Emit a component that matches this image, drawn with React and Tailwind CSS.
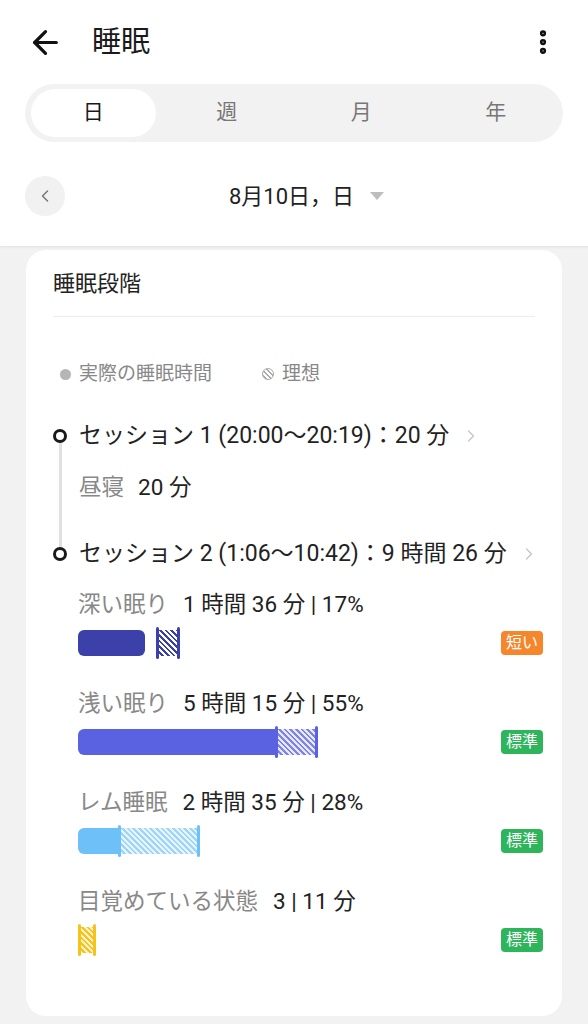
import { ArrowLeft, ChevronLeft, ChevronRight, EllipsisVertical } from 'lucide-react'

const FONT = 'font-[Roboto,"Noto_Sans_CJK_JP",sans-serif]'

const stages = [
  {
    label: '深い眠り',
    value: '1 時間 36 分 | 17%',
    solid: 67,
    gap: 11,
    hatch: 21,
    color: 'bg-[#3b41a9]',
    stripes: 'bg-[repeating-linear-gradient(45deg,#fff_0px,#fff_2px,#3b41a9_2px,#3b41a9_4px)]',
    badge: '短い',
    badgeColor: 'bg-[#f5862c]',
  },
  {
    label: '浅い眠り',
    value: '5 時間 15 分 | 55%',
    solid: 197,
    gap: 0,
    hatch: 40,
    color: 'bg-[#5b62e2]',
    stripes: 'bg-[repeating-linear-gradient(45deg,#e7e8fb_0px,#e7e8fb_2px,#7d83e8_2px,#7d83e8_4px)]',
    badge: '標準',
    badgeColor: 'bg-[#2eb45b]',
  },
  {
    label: 'レム睡眠',
    value: '2 時間 35 分 | 28%',
    solid: 40,
    gap: 0,
    hatch: 79,
    color: 'bg-[#6dc1f8]',
    stripes: 'bg-[repeating-linear-gradient(45deg,#e6f4fe_0px,#e6f4fe_2px,#9dd5fa_2px,#9dd5fa_4px)]',
    badge: '標準',
    badgeColor: 'bg-[#2eb45b]',
  },
  {
    label: '目覚めている状態',
    value: '3 | 11 分',
    solid: 0,
    gap: 0,
    hatch: 15,
    color: 'bg-[#f6c21c]',
    stripes: 'bg-[repeating-linear-gradient(45deg,#fdf1c6_0px,#fdf1c6_2px,#f6c21c_2px,#f6c21c_4px)]',
    badge: '標準',
    badgeColor: 'bg-[#2eb45b]',
  },
]

const StageBar = ({ s }) => (
  <div className="flex items-center h-[32px]">
    {s.solid > 0 && (
      <div className={`h-[26px] rounded-l-[6px] ${s.color} ${s.gap ? 'rounded-r-[6px]' : ''}`} style={{ width: s.solid }} />
    )}
    {s.gap > 0 && <div style={{ width: s.gap }} />}
    <div className={`w-[3px] h-[32px] rounded-full ${s.color}`} />
    <div className={`h-[26px] ${s.stripes}`} style={{ width: s.hatch - 3 }} />
    <div className={`w-[3px] h-[32px] rounded-full ${s.color}`} />
  </div>
)

export default function App() {
  const tabs = ['日', '週', '月', '年']
  return (
    <div className={`min-h-[1024px] bg-[#f2f2f2] ${FONT} text-[#1e1e1e]`}>
      {/* Header */}
      <div className="bg-white border-b border-[#e6e6e6] shadow-[0_1px_2px_rgba(0,0,0,0.04)]">
        <div className="h-[84px] flex items-center pl-[27px] pr-[30px]">
          <ArrowLeft className="w-[37px] h-[37px] text-[#111]" strokeWidth={2.1} />
          <h1 className="ml-[28px] text-[29px] leading-none text-[#1a1a1a]">睡眠</h1>
          <EllipsisVertical className="ml-auto w-[30px] h-[30px] text-[#111]" strokeWidth={3} />
        </div>

        <div className="mx-[25px] h-[58px] rounded-full bg-[#f2f2f2] grid grid-cols-4">
          {tabs.map((t, i) =>
            i === 0 ? (
              <div key={t} className="flex py-[5px] pl-[6px] pr-[4px]">
                <div className="flex-1 flex items-center justify-center rounded-full bg-white text-[21px] text-[#1a1a1a]">
                  {t}
                </div>
              </div>
            ) : (
              <div key={t} className="flex items-center justify-center text-[21px] text-[#777]">
                {t}
              </div>
            )
          )}
        </div>

        <div className="mt-[34px] pb-[30px] px-[25px] flex items-center">
          <div className="w-[40px] h-[40px] rounded-full bg-[#f1f1f1] flex items-center justify-center">
            <ChevronLeft className="w-[20px] h-[20px] text-[#777]" strokeWidth={1.8} />
          </div>
          <span className="ml-[164px] text-[22px] text-[#222]">8月10日，日</span>
          <span className="ml-[16px] w-0 h-0 border-l-[7px] border-r-[7px] border-t-[8px] border-l-transparent border-r-transparent border-t-[#bdbdbd]" />
        </div>
      </div>

      {/* Card */}
      <div className="mx-[26px] mt-[3px] bg-white rounded-[20px] px-[27px] pb-[60px]">
        <div className="h-[67px] flex items-center text-[22px] text-[#222] border-b border-[#ececec]">睡眠段階</div>

        <div className="mt-[40px] h-[34px] flex items-center text-[19px] text-[#888]">
          <span className="ml-[7px] w-[11px] h-[11px] rounded-full bg-[#b5b5b5]" />
          <span className="ml-[8px]">実際の睡眠時間</span>
          <span className="ml-[50px] w-[12px] h-[12px] rounded-full border border-[#aaa] bg-[repeating-linear-gradient(45deg,#fff_0px,#fff_2px,#aaa_2px,#aaa_3.5px)]" />
          <span className="ml-[8px]">理想</span>
        </div>

        {/* Sessions */}
        <div className="mt-[28px] flex">
          <div className="shrink-0 w-[28px] -ml-[7px] flex flex-col items-center pt-[10px]">
            <span className="w-[14px] h-[14px] rounded-full border-[3px] border-[#1a1a1a]" />
            <span className="w-[3px] h-[104px] bg-[#e0e0e0]" />
            <span className="w-[14px] h-[14px] rounded-full border-[3px] border-[#1a1a1a]" />
          </div>
          <div className="flex-1 min-w-0 ml-[5px] whitespace-nowrap">
            <div className="h-[34px] flex items-center text-[23px] text-[#222]">
              <span>セッション 1 (20:00〜20:19)：20 分</span>
              <ChevronRight className="shrink-0 ml-[12px] w-[20px] h-[20px] text-[#c4c4c4]" strokeWidth={1.5} />
            </div>
            <div className="mt-[18px] h-[34px] flex items-center text-[22.5px]">
              <span className="text-[#888]">昼寝</span>
              <span className="ml-[14px] text-[#222]">20 分</span>
            </div>
            <div className="mt-[32px] h-[34px] flex items-center text-[23px] text-[#222]">
              <span>セッション 2 (1:06〜10:42)：9 時間 26 分</span>
              <ChevronRight className="shrink-0 ml-[12px] w-[20px] h-[20px] text-[#c4c4c4]" strokeWidth={1.5} />
            </div>
          </div>
        </div>

        {/* Stages */}
        <div className="pl-[25px] mt-[17px] flex flex-col gap-[28px]">
          {stages.map((s) => (
            <div key={s.label}>
              <div className="h-[34px] flex items-center text-[22.5px] whitespace-nowrap">
                <span className="text-[#888]">{s.label}</span>
                <span className="ml-[15px] text-[#222]">{s.value}</span>
              </div>
              <div className="mt-[5px] flex items-center justify-between">
                <StageBar s={s} />
                <span className={`mr-[-8px] px-[5px] h-[24px] flex items-center rounded-[4px] text-[16px] text-white ${s.badgeColor}`}>
                  {s.badge}
                </span>
              </div>
            </div>
          ))}
        </div>
      </div>
      <div className="h-[8px]" />
    </div>
  )
}
